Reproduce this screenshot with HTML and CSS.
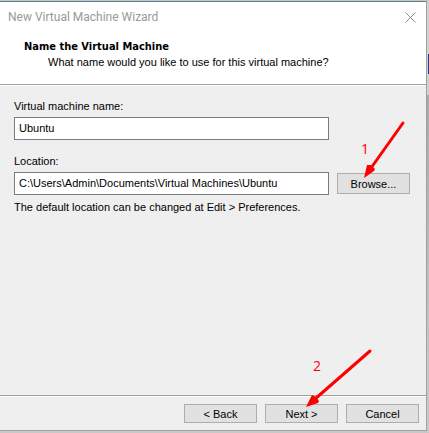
FILE: index.html
```
<!DOCTYPE html>
<html lang="en">
<head>
<meta charset="utf-8">
<title>New Virtual Machine Wizard</title>
<link rel="stylesheet" href="styles.css">
</head>
<body>
<main class="window">
  <header class="header">
    <div class="titlebar">
      <span class="title">New Virtual Machine Wizard</span>
      <button class="close" type="button" aria-label="Close">
        <svg viewBox="0 0 11 11" width="11" height="11"><path d="M.5 .5l10 10M10.500 .5l-10 10" fill="none" stroke="#8a8a8a" stroke-width="1"/></svg>
      </button>
    </div>
    <h1 class="heading">Name the Virtual Machine</h1>
    <p class="subheading">What name would you like to use for this virtual machine?</p>
  </header>
  <form class="content">
    <div class="field">
      <label for="vm-name">Virtual machine name:</label>
      <div class="row"><input id="vm-name" type="text" value="Ubuntu"></div>
    </div>
    <div class="field">
      <label for="location">Location:</label>
      <div class="row">
        <input id="location" type="text" value="C:\Users\Admin\Documents\Virtual Machines\Ubuntu">
        <div class="anchor">
          <button class="button browse" type="button">Browse...</button>
          <span class="step step-one">1</span>
          <svg class="arrow arrow-one" viewBox="0 0 44 60" width="44" height="60">
            <path d="M41 3L9 48" fill="none" stroke="#f00" stroke-width="3" stroke-linecap="round"/>
            <path d="M2 58L5 45L9 45L13 49L12 51Z" fill="#f00"/>
          </svg>
        </div>
      </div>
    </div>
    <p class="hint">The default location can be changed at Edit &gt; Preferences.</p>
  </form>
  <footer class="footer">
    <button class="button" type="button">&lt; Back</button>
    <div class="anchor">
      <button class="button" type="button">Next &gt;</button>
      <span class="step step-two">2</span>
      <svg class="arrow arrow-two" viewBox="0 0 68 60" width="68" height="60">
        <path d="M65 3L10 51" fill="none" stroke="#f00" stroke-width="3" stroke-linecap="round"/>
        <path d="M1 59L7 47L11 49L14 53L13 55Z" fill="#f00"/>
      </svg>
    </div>
    <button class="button" type="button">Cancel</button>
  </footer>
</main>
<aside class="backdrop" aria-hidden="true"><div class="tab"></div></aside>
</body>
</html>
```
FILE: styles.css
```
* { box-sizing: border-box; }
body {
  margin: 0;
  min-height: 100vh;
  display: grid;
  grid-template-columns: 1fr 2px;
  background: #c8c8c8;
  color: #000;
  font: 11px/14px "Liberation Sans", Arial, sans-serif;
  padding-top: 1px;
  overflow: hidden;
}
h1, p { margin: 0; }
.window {
  display: flex;
  flex-direction: column;
  margin-bottom: 2px;
  background: #efefef;
  border: 1px solid #a0a0a0;
  border-top-color: #5f7f8c;
  border-left: 0;
}
.header {
  height: 83px;
  background: #fff;
  border-bottom: 1px solid #a0a0a0;
}
.titlebar {
  display: flex;
  justify-content: space-between;
  align-items: center;
  height: 30px;
  padding: 0 10px 0 8px;
}
.title {
  color: #999;
  font: 12px/16px Roboto, "Noto Sans", sans-serif;
}
.close {
  display: flex;
  padding: 0;
  border: 0;
  background: none;
}
.heading {
  padding: 8px 0 0 24px;
  font: bold 11px/14px "DejaVu Sans Condensed", "Noto Sans", sans-serif;
}
.subheading { padding: 1px 0 0 48px; }
.content {
  flex: 1;
  padding: 13px 16px 0 14px;
  border-top: 1px solid #fff;
}
.field { margin-bottom: 14px; }
.field label { display: block; margin-bottom: 4px; }
.row {
  display: grid;
  grid-template-columns: 1fr 73px;
  gap: 8px;
  align-items: center;
}
input {
  width: 100%;
  height: 23px;
  padding: 0 4px 2px;
  border: 1px solid #7a7a7a;
  border-radius: 0;
  background: #fff;
  color: #000;
  font: inherit;
}
.button {
  display: block;
  width: 73px;
  height: 19px;
  padding: 0;
  border: 1px solid #adadad;
  border-radius: 0;
  background: #e1e1e1;
  color: #000;
  font: inherit;
}
.browse { height: 21px; }
.hint { margin-top: -9px; }
.anchor { position: relative; }
.step, .arrow { position: absolute; pointer-events: none; }
.step {
  color: #f00;
  font: 14px/16px "Open Sans", "Noto Sans", sans-serif;
}
.step-one { left: 24px; bottom: 37px; }
.step-two { left: 48px; bottom: 56px; }
.arrow-one { left: 25px; bottom: 14px; }
.arrow-two { left: 40px; bottom: 22px; }
.footer {
  display: flex;
  justify-content: flex-end;
  gap: 8px;
  height: 35px;
  padding: 8px 7px 0 0;
  border-top: 1px solid #a0a0a0;
  box-shadow: inset 0 1px #fff;
}
.backdrop {
  padding-top: 53px;
  background: linear-gradient(#d2d2d2 94px, #a8a8a8 94px, #c8c8c8 360px);
}
.tab { height: 20px; margin-left: 1px; background: #34347e; }
```
